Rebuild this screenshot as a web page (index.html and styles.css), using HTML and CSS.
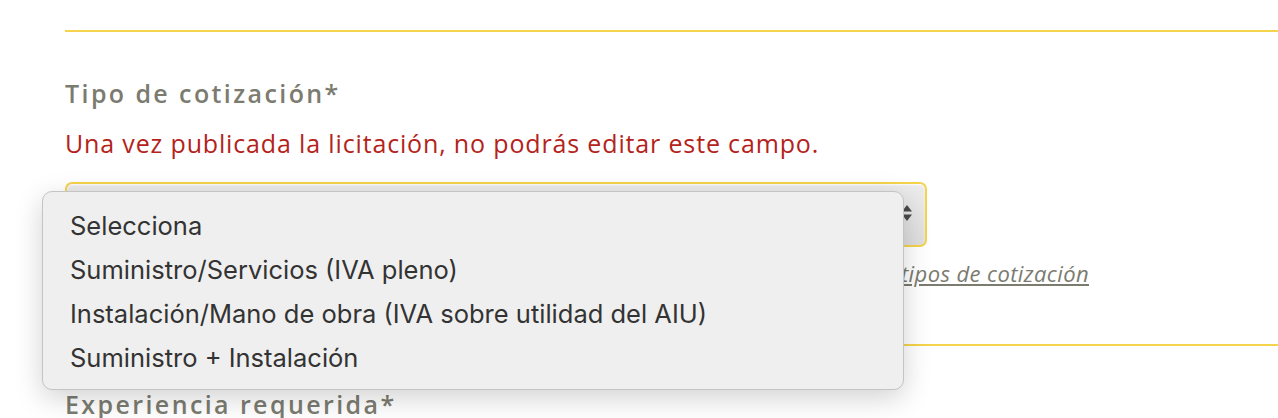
FILE: index.html
```html
<!DOCTYPE html>
<html lang="es">
<head>
  <meta charset="UTF-8" />
  <meta name="viewport" content="width=device-width, initial-scale=1" />
  <title>Nueva licitación – Tipo de cotización</title>
  <link rel="stylesheet" href="styles.css">
</head>
<body>
<main>
  <section class="field">
    <h2 class="field-label">Tipo de cotización*</h2>
    <p class="field-warning">Una vez publicada la licitación, no podrás editar este campo.</p>

    <div class="select-wrap">
      <div class="select-box">
        <span class="select-arrows">
          <svg width="12" height="18" viewBox="0 0 12 18"><path d="M6 1 L11 7.5 L1 7.5 Z" fill="#4a4a4a"/><path d="M6 17 L11 10.5 L1 10.5 Z" fill="#4a4a4a"/></svg>
        </span>
      </div>

      <ul class="select-menu">
        <li>Selecciona</li>
        <li>Suministro/Servicios (IVA pleno)</li>
        <li>Instalación/Mano de obra (IVA sobre utilidad del AIU)</li>
        <li>Suministro + Instalación</li>
      </ul>
    </div>

    <p class="field-help"><a href="#">Conoce en detalle cómo funcionan y en qué se diferencian los tipos de cotización</a></p>
  </section>

  <section class="field">
    <h2 class="field-label">Experiencia requerida*</h2>
  </section>
</main>
</body>
</html>
```

FILE: styles.css
```css
:root {
  --yellow: #f6d34c;
  --label-gray: #7b7b70;
  --warn-red: #b3231b;
}
body {
  margin: 0;
  font-family: 'Open Sans', 'Liberation Sans', sans-serif;
  background-color: #ffffff;
  overflow: hidden;
}
main {
  padding: 30px 0 0 65px;
}
.field {
  border-top: 2px solid var(--yellow);
  padding-top: 46px;
}
.field-label {
  margin: 0;
  font-size: 25px;
  line-height: 30px;
  font-weight: 600;
  letter-spacing: 2.4px;
  color: var(--label-gray);
}
.field-warning {
  margin: 20px 0 0 0;
  font-size: 25px;
  line-height: 30px;
  letter-spacing: 0.85px;
  color: var(--warn-red);
}
.select-wrap {
  position: relative;
  margin-top: 24px;
}
.select-box {
  width: 858px;
  height: 61px;
  border: 2px solid var(--yellow);
  border-radius: 7px;
  background: linear-gradient(#ececec, #dedede);
  box-shadow: inset 0 1px 2px rgba(255,255,255,0.9);
  display: flex;
  align-items: center;
  justify-content: flex-end;
}
.select-arrows {
  display: flex;
  margin-right: 12px;
  margin-top: -4px;
}
.select-menu {
  position: absolute;
  left: -23px;
  top: 9px;
  width: 860px;
  margin: 0;
  padding: 12px 0 9px 0;
  list-style: none;
  background: #efefef;
  border: 1px solid #c4c4c4;
  border-radius: 10px;
  box-shadow: 0 8px 28px rgba(0,0,0,0.18);
  font-family: 'Inter', 'Roboto', sans-serif;
  font-size: 25.5px;
  color: #333333;
}
.select-menu li {
  height: 44px;
  line-height: 44px;
  padding-left: 27px;
}
.field-help {
  max-width: 1024px;
  text-align: right;
  margin: 12px 0 0 0;
  font-size: 22px;
  line-height: 28px;
  letter-spacing: 0.4px;
  font-style: italic;
}
.field-help a {
  color: var(--label-gray);
}
.field:first-child {
  padding-bottom: 57px;
}
.field:last-child {
  padding-top: 43px;
}
```
